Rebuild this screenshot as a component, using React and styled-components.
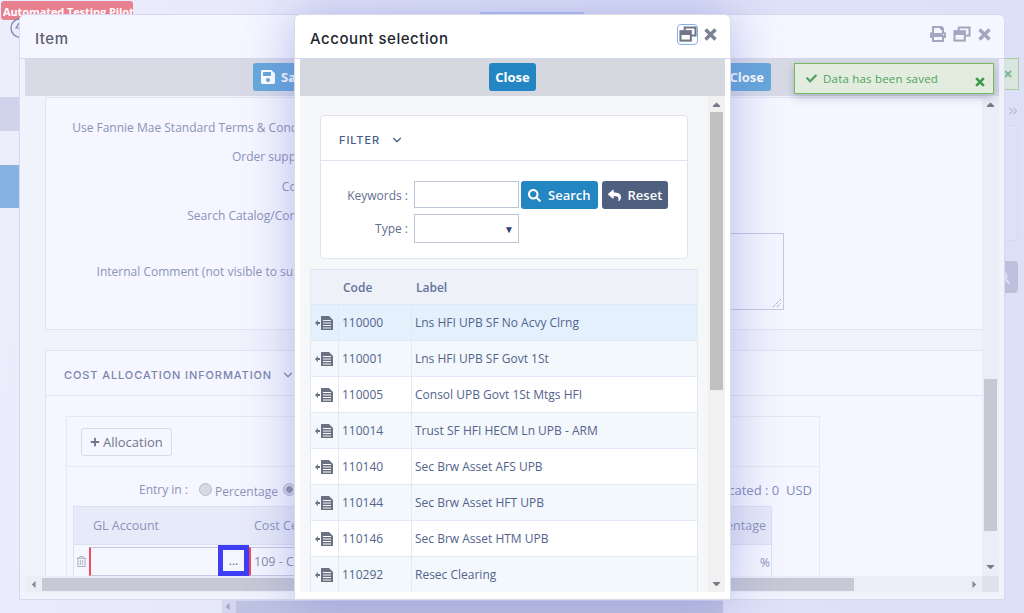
import React from "react";
import styled, { createGlobalStyle } from "styled-components";
import { FaCheck, FaPrint, FaSearch, FaReply, FaPlus, FaRegTrashAlt, FaSave, FaCaretUp, FaCaretDown, FaCaretLeft, FaCaretRight } from "react-icons/fa";
import { FiChevronDown, FiChevronsRight } from "react-icons/fi";

const Global = createGlobalStyle`
  html, body { margin: 0; padding: 0; width: 1024px; height: 613px; overflow: hidden; }
  * { box-sizing: border-box; }
  body { font-family: "Open Sans", "Liberation Sans", sans-serif; }
`;

const Desk = styled.div`
  position: relative; width: 1024px; height: 613px; overflow: hidden;
  background: linear-gradient(100deg, #eceefc 0%, #dfe2f7 60%, #dcdff6 100%);
`;
const Badge = styled.div`
  position: absolute; left: 1px; top: 1px; width: 132px; height: 19px; border-radius: 3px;
  background: #e8808f; color: #fff; font: 700 11px/21px "Open Sans", sans-serif; letter-spacing: -.1px; padding-left: 2px; white-space: nowrap;
`;
const TopTab = styled.div`position: absolute; left: 480px; top: 12px; width: 104px; height: 3px; background: #b9c2f0;`;
const SideBlock = styled.div`
  position: absolute; left: 0; width: 20px; top: ${p => p.$top}px; height: ${p => p.$h}px; background: ${p => p.$c};
`;
const ClockMark = styled.svg`position: absolute; left: 10px; top: 17px; width: 12px; height: 22px;`;
const GhostToast = styled.div`
  position: absolute; left: 1004px; top: 58px; width: 15px; height: 32px; border: 1px solid #a6cf9c; border-left: 0;
  background: #d9e6dd; color: #83b894; display: flex; align-items: center; justify-content: flex-start;
`;
const GhostChevron = styled.div`position: absolute; left: 1006px; top: 104px; color: #b4b8e0; font-size: 14px; display: flex;`;
const GhostCard = styled.div`
  position: absolute; left: 1004px; top: 125px; width: 14px; height: 116px; border: 1px solid #d5d8f0; border-left: 0;
  border-radius: 0 4px 4px 0; background: #dfe1fa;
`;
const GhostButton = styled.div`
  position: absolute; left: 1004px; top: 261px; width: 14px; height: 32px; border-radius: 0 4px 4px 0; background: #bdbfdc;
  overflow: hidden; display: flex; align-items: center; color: #dcddf0;
  svg { margin-left: -7px; flex: none; }
`;
const PageScroll = styled.div`
  position: absolute; left: 222px; top: 600px; width: 501px; height: 13px; display: flex; align-items: center; background: #d3d6ee; color: #9da2c8;
`;
const PageThumb = styled.div`width: 487px; height: 12px; margin-left: 3px; background: #bfc3e2;`;

const Win = styled.section`
  position: absolute; display: flex; flex-direction: column; overflow: hidden;
  left: ${p => p.$x}px; top: 14px; width: ${p => p.$w}px; height: 586px; border-radius: 6px 6px 0 0;
  border: 1px solid ${p => p.$modal ? "#d9dbe6" : "#d6d9ef"};
  background: ${p => p.$modal ? "#fff" : "#f5f6ff"};
  ${p => p.$modal ? "box-shadow: 0 0 50px rgba(95,105,205,.42);" : ""}
`;
const WinHead = styled.header`
  height: 44px; flex: none; display: flex; align-items: center; justify-content: space-between;
  padding: 5px 13px 0 15px; border-bottom: 1px solid #d5d7f0;
`;
const WinTitle = styled.h2`
  margin: 0; font: 500 15px/20px Inter, "Open Sans", sans-serif; letter-spacing: .55px; color: ${p => p.$modal ? "#22252e" : "#5c5f70"};
`;
const HeadIcons = styled.div`
  display: flex; align-items: center; gap: 7px; color: ${p => p.$modal ? "#7a8196" : "#a2a7bf"}; margin-top: -10px;
`;
const RestoreBox = styled.span`
  display: inline-flex; width: 19px; height: 19px; align-items: center; justify-content: center;
  ${p => p.$focus ? "outline: 1.5px solid #87aef5; border-radius: 3px;" : ""}
`;
const WinBody = styled.div`flex: 1; min-height: 0; display: flex; flex-direction: column; padding: 0 5px 7px 5px; background: ${p => p.$modal ? "#fff" : "#f0f2fc"};`;
const Toolbar = styled.div`
  flex: none; height: 37px; display: flex; align-items: flex-start; justify-content: center; padding-top: 4px;
  background: ${p => p.$modal ? "#d5d8df" : "#d8dbe6"};
`;
const ToolGroup = styled.div`width: 518px; display: flex; justify-content: space-between;`;
const Btn = styled.button`
  border: 0; border-radius: 3px; height: 28px; padding: 0 ${p => p.$px || 6}px; display: inline-flex; align-items: center; gap: ${p => p.$gap || 5}px;
  font: ${p => p.$weight || 700} 13px "Open Sans", sans-serif; color: #fff; background: ${p => p.$bg || "#2385c1"}; white-space: nowrap;
`;
const Main = styled.div`flex: 1; min-height: 0; display: flex; overflow: hidden;`;
const Scroller = styled.div`flex: 1; min-width: 0; overflow: hidden;`;
const VBar = styled.div`
  flex: none; width: 17px; display: flex; flex-direction: column; align-items: center; background: ${p => p.$bg};
  color: #787a88; font-size: 13px; padding: 1px 0 ${p => p.$pb}px;
`;
const Thumb = styled.div`width: 13px; flex: none; height: ${p => p.$h}px; margin-top: ${p => p.$mt}px; margin-bottom: auto; background: ${p => p.$c};`;
const ArrowSlot = styled.div`height: 15px; flex: none; display: flex; align-items: center; justify-content: center;`;
const HBar = styled.div`flex: none; height: 16px; display: flex; align-items: center; background: #ecedf6; color: #85889a;`;
const HThumb = styled.div`width: 812px; height: 13px; margin-left: 1px; background: #c6c8d5;`;
const HSpacer = styled.div`flex: 1;`;
const HCap = styled.div`width: 16px; display: flex; justify-content: center;`;
const HCorner = styled.div`width: 17px; height: 16px; background: #e0e1ec;`;

const FormPanel = styled.div`
  margin: 1px 0 0 20px; height: 233px; border: 1px solid #e2e4f5; border-right: 0; background: #f5f6ff; padding-top: 14px;
`;
const FormRow = styled.div`
  display: grid; grid-template-columns: 289px 1fr; align-items: center; height: ${p => p.$h}px; margin-top: ${p => p.$mt || 0}px;
`;
const FormLabel = styled.label`font-size: 12px; color: #8b93b8; text-align: right; white-space: nowrap; padding-right: ${p => p.$pr || 0}px;`;
const FormArea = styled.div`
  position: relative; margin-left: 10px; width: 439px; height: 77px; border: 1px solid #c4c9e2;
`;
const Grip = styled.svg`position: absolute; right: 1px; bottom: 1px; width: 10px; height: 10px;`;

const CostPanel = styled.div`margin: 20px 0 0 20px; border: 1px solid #e2e4f5; border-right: 0; background: #f5f6ff; height: 300px;`;
const CostHead = styled.div`
  height: 45px; display: flex; align-items: center; gap: 9px; padding: 4px 0 0 18px; border-bottom: 1px solid #e2e4f5;
  font: 500 11px Inter, sans-serif; letter-spacing: .9px; color: #7b84ad;
`;
const AllocBox = styled.div`margin: 20px 0 0 20px; width: 754px; height: 220px; border: 1px solid #e6e8f6;`;
const AllocTop = styled.div`height: 50px; padding: 11px 14px 0; border-bottom: 1px solid #e6e8f6;`;
const GhostBtn = styled.button`
  width: 91px; height: 28px; border: 1px solid #d8dbea; border-radius: 3px; background: #f5f6ff; color: #72768c;
  font: 500 13px "Open Sans", sans-serif; display: inline-flex; align-items: center; gap: 3px; padding: 0 0 0 8px;
`;
const EntryRow = styled.div`
  height: 39px; display: flex; align-items: center; padding: 6px 7px 0 72px; font-size: 12px; color: #8b93b8;
`;
const Radio = styled.span`
  width: 13px; height: 13px; border-radius: 50%; flex: none; margin: 0 3px 0 ${p => p.$ml}px; border: 1px solid #b6b9c9;
  background: ${p => p.$on ? "radial-gradient(circle, #8c90a6 0 3px, #d8d9e6 3.5px)" : "#d8d9e6"};
`;
const Choice = styled.span`margin-top: 3px;`;
const Totals = styled.span`margin-left: auto; color: #7f8cbc; font-size: 13px;`;
const AllocGrid = styled.div`
  margin-left: 6px; width: 699px; border-left: 1px solid #dbe0f4; border-right: 1px solid #dbe0f4;
`;
const AllocHead = styled.div`
  height: 39px; display: grid; grid-template-columns: 19px 161px 1fr auto; align-items: center; padding-right: 5px;
  background: #e7eaf8; font: 500 12.5px "Open Sans", sans-serif; color: #8a94bd; border-top: 1px solid #dbe0f4; border-bottom: 1px solid #dbe0f4;
`;
const AllocRow = styled.div`
  height: 40px; display: grid; grid-template-columns: 15px 129px 31px 1fr auto; font-size: 12px; color: #848ca9;
`;
const TrashCell = styled.div`display: flex; justify-content: center; padding-top: 11px; color: #adb0c4; font-size: 11px;`;
const Required = styled.div`height: 29px; margin-top: 2px; border-left: 2px solid #f14a58; border-top: 1px solid #c4c9e2; border-bottom: 1px solid #c4c9e2;`;
const DotsBtn = styled.button`
  width: 31px; height: 31px; border: 5px solid #3e3ef5; background: #f5f6ff; color: #666a7c; font: 12px "Open Sans", sans-serif; padding: 0;
`;
const CenterInput = styled.div`
  width: 160px; justify-self: start; height: 29px; margin-top: 2px; border: 1px solid #c4c9e2; border-left: 2px solid #f14a58; display: flex; align-items: center;
  padding: 0 0 0 3px; font-size: 12.5px; color: #848ca9;
`;
const PercentCell = styled.div`padding: 9px 1px 0 0; color: #8a94bd;`;

const ModalBody = styled.div`flex: 1; min-height: 0; overflow: hidden; background: #f6f7f9; padding: 19px 0 0 10px;`;
const FilterCard = styled.div`margin-left: 10px; width: 368px; height: 144px; background: #fff; border: 1px solid #dfe3ef; border-radius: 4px;`;
const FilterHead = styled.div`
  height: 45px; display: flex; align-items: center; gap: 10px; padding: 4px 0 0 18px; border-bottom: 1px solid #dfe3ef;
  font: 500 11px Inter, sans-serif; letter-spacing: .9px; color: #455a87;
`;
const FilterGrid = styled.div`
  display: grid; grid-template-columns: 87px 105px auto auto; column-gap: 6px; row-gap: 5px; padding: 20px 0 0 0; justify-content: start; align-items: center;
`;
const FieldLabel = styled.label`font-size: 12px; color: #636f92; text-align: right; white-space: nowrap;`;
const TextBox = styled.div`height: 27px; align-self: start; border: 1px solid #bcc5da; background: #fff;`;
const SelectBox = styled.div`
  height: 29px; border: 1px solid #bcc5da; background: #fff; display: flex; align-items: center; justify-content: flex-end; padding-right: 4px; color: #2e4272; font-size: 10px;
`;
const Buttons = styled.div`display: flex; gap: 4px; margin-left: -4px;`;
const DataTable = styled.div`margin-top: 10px; width: 388px; border-left: 1px solid #e2e9f6; border-right: 1px solid #e2e9f6; border-top: 1px solid #dbe5f4;`;
const Tr = styled.div`
  display: grid; grid-template-columns: 28px 73px 1fr; height: ${p => p.$h || 36}px; background: ${p => p.$bg}; border-bottom: 1px solid #e2e9f6;
`;
const Th = styled.div`
  display: flex; align-items: center; padding-left: ${p => p.$pl || 0}px; font-size: 12px; font-weight: 600; color: #64749a;
`;
const Td = styled.div`
  display: flex; align-items: center; padding-left: 3px; font-size: 12px; color: #53638c; border-right: ${p => p.$line ? "1px solid #e2e9f6" : "0"}; white-space: nowrap;
`;
const IconCell = styled(Td)`padding: 0 0 0 4px; color: #6a7181;`;

const ToastBox = styled.div`
  position: absolute; left: 794px; top: 63px; width: 200px; height: 31px; background: #e2ecdf; border: 1px solid #7ab95b;
  box-shadow: 0 3px 10px rgba(60,60,110,.3); display: flex; align-items: center; gap: 6px; padding: 0 8px 0 11px; color: #4fa35a;
  font-size: 11.5px; letter-spacing: .2px;
`;
const ToastClose = styled.span`margin-left: auto; margin-top: 6px; color: #3f9a4c; display: flex;`;

const XIcon = ({ size = 13 }) => (
  <svg width={size} height={size} viewBox="0 0 13 13" fill="none" stroke="currentColor" strokeWidth="3.4">
    <path d="M1.5 1.5 L11.5 11.5 M11.5 1.5 L1.5 11.5" />
  </svg>
);
const RowIcon = () => (
  <svg width="20" height="16" viewBox="0 0 20 16" fill="currentColor">
    <path d="M0 8 L3 5 V7 H5 V9 H3 V11 Z" />
    <path fillRule="evenodd" d="M6 1 H14 L18 5 V15 H6 Z M8 5 V6 H16 V5 Z M8 7.5 V8.5 H16 V7.5 Z M8 10 V11 H16 V10 Z M8 12.5 V13.5 H16 V12.5 Z" />
  </svg>
);
const RestoreIcon = ({ c }) => (
  <svg width="18" height="16" viewBox="0 0 19 17" fill="none" stroke={c} strokeWidth="2.2">
    <path d="M6 5 V1.5 H17.5 V10 H13" />
    <rect x="1.5" y="5.5" width="11" height="10" />
    <path d="M1.5 8 H12.5" strokeWidth="3" />
  </svg>
);

const rows = [
  ["110000", "Lns HFI UPB SF No Acvy Clrng", "#e4f1fd"],
  ["110001", "Lns HFI UPB SF Govt 1St", "#f3f8fd"],
  ["110005", "Consol UPB Govt 1St Mtgs HFI", "#fff"],
  ["110014", "Trust SF HFI HECM Ln UPB - ARM", "#f3f8fd"],
  ["110140", "Sec Brw Asset AFS UPB", "#fff"],
  ["110144", "Sec Brw Asset HFT UPB", "#f3f8fd"],
  ["110146", "Sec Brw Asset HTM UPB", "#fff"],
  ["110292", "Resec Clearing", "#f3f8fd"],
];

function Toast() {
  return (
    <ToastBox>
      <FaCheck size={11} />
      Data has been saved
      <ToastClose><XIcon size={10} /></ToastClose>
    </ToastBox>
  );
}

export default function App() {
  return (
    <Desk>
      <Global />
      <Badge>Automated Testing Pilot</Badge>
      <TopTab />
      <ClockMark viewBox="0 0 12 22">
        <circle cx="10.5" cy="11" r="9.5" fill="none" stroke="#7d84ad" strokeWidth="1.3" />
        <path d="M9 6 L6 11 H10" fill="none" stroke="#7d84ad" strokeWidth="1.2" />
      </ClockMark>
      <SideBlock $top={97} $h={34} $c="#cfd2ea" />
      <SideBlock $top={165} $h={43} $c="#87b3e3" />
      <GhostToast><XIcon size={8} /></GhostToast>
      <GhostChevron><FiChevronsRight /></GhostChevron>
      <GhostCard />
      <GhostButton><FaSearch size={13} /></GhostButton>
      <PageScroll><FaCaretLeft size={11} /><PageThumb /></PageScroll>

      <Win $x={19} $w={986}>
        <WinHead>
          <WinTitle>Item</WinTitle>
          <HeadIcons>
            <FaPrint size={16} />
            <RestoreIcon c="#a2a7bf" />
            <XIcon />
          </HeadIcons>
        </WinHead>
        <WinBody>
          <Toolbar>
            <ToolGroup>
              <Btn $bg="#67a8db" $px={7}><FaSave size={16} />Save</Btn>
              <Btn $bg="#67a8db" $px={7}>Close</Btn>
            </ToolGroup>
          </Toolbar>
          <Main>
            <Scroller>
              <FormPanel>
                <FormRow $h={30}><FormLabel>Use Fannie Mae Standard Terms &amp; Conditions :</FormLabel></FormRow>
                <FormRow $h={29}><FormLabel $pr={15}>Order supplier :</FormLabel></FormRow>
                <FormRow $h={30}><FormLabel $pr={18}>Code :</FormLabel></FormRow>
                <FormRow $h={29}><FormLabel $pr={6}>Search Catalog/Contract :</FormLabel></FormRow>
                <FormRow $h={77} $mt={3}>
                  <FormLabel $pr={6}>Internal Comment (not visible to supplier)</FormLabel>
                  <FormArea>
                    <Grip viewBox="0 0 10 10" stroke="#858796" strokeDasharray="1 1"><path d="M1 9 L9 1 M5 9 L9 5" /></Grip>
                  </FormArea>
                </FormRow>
              </FormPanel>
              <CostPanel>
                <CostHead>COST ALLOCATION INFORMATION<FiChevronDown size={14} /></CostHead>
                <AllocBox>
                  <AllocTop><GhostBtn><FaPlus size={10} />Allocation</GhostBtn></AllocTop>
                  <EntryRow>
                    Entry in :
                    <Radio $ml={11} /><Choice>Percentage</Choice>
                    <Radio $ml={5} $on /><Choice>Amount</Choice>
                    <Totals>Total Allocated : 0 &nbsp;USD</Totals>
                  </EntryRow>
                  <AllocGrid>
                    <AllocHead><span /><span>GL Account</span><span>Cost Center</span><span>Percentage</span></AllocHead>
                    <AllocRow>
                      <TrashCell><FaRegTrashAlt /></TrashCell>
                      <Required />
                      <DotsBtn>...</DotsBtn>
                      <CenterInput>109 - Corporate</CenterInput>
                      <PercentCell>%</PercentCell>
                    </AllocRow>
                  </AllocGrid>
                </AllocBox>
              </CostPanel>
            </Scroller>
            <VBar $bg="#ecedf6" $pb={2}>
              <ArrowSlot><FaCaretUp /></ArrowSlot>
              <Thumb $h={152} $mt={267} $c="#c6c8d5" />
              <ArrowSlot><FaCaretDown /></ArrowSlot>
            </VBar>
          </Main>
          <HBar>
            <HCap><FaCaretLeft size={11} /></HCap>
            <HThumb />
            <HSpacer />
            <HCap><FaCaretRight size={11} /></HCap>
            <HCorner />
          </HBar>
        </WinBody>
      </Win>

      <Win $x={294} $w={437} $modal>
        <WinHead $modal>
          <WinTitle $modal>Account selection</WinTitle>
          <HeadIcons $modal>
            <RestoreBox $focus><RestoreIcon c="#6f7687" /></RestoreBox>
            <XIcon />
          </HeadIcons>
        </WinHead>
        <WinBody $modal>
          <Toolbar $modal><Btn>Close</Btn></Toolbar>
          <Main>
            <ModalBody>
              <FilterCard>
                <FilterHead>FILTER<FiChevronDown size={14} /></FilterHead>
                <FilterGrid>
                  <FieldLabel>Keywords :</FieldLabel>
                  <TextBox />
                  <Buttons>
                    <Btn $px={7} $gap={7} $weight={600}><FaSearch size={13} />Search</Btn>
                    <Btn $bg="#4f5f80" $px={6} $gap={7} $weight={600}><FaReply size={13} />Reset</Btn>
                  </Buttons>
                  <span />
                  <FieldLabel>Type :</FieldLabel>
                  <SelectBox>▼</SelectBox>
                </FilterGrid>
              </FilterCard>
              <DataTable>
                <Tr $h={35} $bg="#eef1f8">
                  <Th /><Th $pl={4}>Code</Th><Th $pl={4}>Label</Th>
                </Tr>
                {rows.map(([code, label, bg]) => (
                  <Tr key={code} $bg={bg}>
                    <IconCell $line><RowIcon /></IconCell>
                    <Td $line>{code}</Td>
                    <Td>{label}</Td>
                  </Tr>
                ))}
              </DataTable>
            </ModalBody>
            <VBar $bg="#f1f1f1" $pb={1}>
              <ArrowSlot><FaCaretUp /></ArrowSlot>
              <Thumb $h={278} $mt={0} $c="#c1c1c1" />
              <ArrowSlot><FaCaretDown /></ArrowSlot>
            </VBar>
          </Main>
        </WinBody>
      </Win>

      <Toast />
    </Desk>
  );
}
